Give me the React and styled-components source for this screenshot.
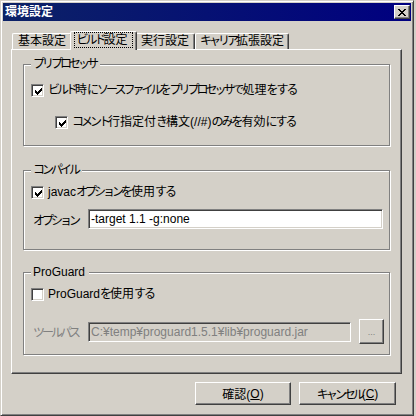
import React from "react";
import styled, { createGlobalStyle } from "styled-components";

const FONT = '"Liberation Sans", "Noto Sans CJK JP", sans-serif';

const GlobalStyle = createGlobalStyle`
  html, body { margin: 0; padding: 0; background: #d4d0c8; }
  body { font-family: ${FONT}; font-size: 12px; color: #000; }
`;

/* MS UI Gothic draws kana narrower than kanji: tighten kana runs */
const Hira = styled.span`
  letter-spacing: -2px;
`;
const Kata = styled.span`
  letter-spacing: -3px;
`;

function T({ children }) {
  const text = String(children);
  const parts = [];
  const re = /([\u3041-\u309F]+)|([\u30A0-\u30FF]+)|([^\u3041-\u30FF]+)/g;
  let m;
  let i = 0;
  while ((m = re.exec(text))) {
    if (m[1]) parts.push(<Hira key={i++}>{m[1]}</Hira>);
    else if (m[2]) parts.push(<Kata key={i++}>{m[2]}</Kata>);
    else parts.push(<React.Fragment key={i++}>{m[3]}</React.Fragment>);
  }
  return <>{parts}</>;
}

const Window = styled.div`
  box-sizing: border-box;
  width: 414px;
  height: 416px;
  background: #d4d0c8;
  border: 1px solid;
  border-color: #d4d0c8 #404040 #404040 #d4d0c8;
  box-shadow: inset 1px 1px 0 #fff, inset -1px -1px 0 #808080;
  padding: 2px;
  display: flex;
  flex-direction: column;
`;

const TitleBar = styled.div`
  height: 18px;
  display: flex;
  align-items: center;
  justify-content: space-between;
  background: linear-gradient(to right, #0c2266, #000080);
  padding: 0 1px 0 2px;
`;

const TitleText = styled.span`
  color: #fff;
  font-weight: bold;
  font-size: 12px;
  line-height: 14px;
`;

const RaisedBox = styled.div`
  box-sizing: border-box;
  background: #d4d0c8;
  border: 1px solid;
  border-color: #fff #404040 #404040 #fff;
  box-shadow: inset -1px -1px 0 #808080;
`;

const CloseButton = styled(RaisedBox)`
  width: 16px;
  height: 14px;
  display: flex;
  align-items: center;
  justify-content: center;
  svg { display: block; }
`;

const Body = styled.div`
  flex: 1;
  display: flex;
  flex-direction: column;
  padding: 10px 9px 0 8px;
`;

const TabStrip = styled.div`
  height: 18px;
  display: flex;
  align-items: flex-end;
  padding-left: 1px;
`;

const Tab = styled.div`
  box-sizing: border-box;
  position: relative;
  z-index: ${(p) => (p.$active ? 1 : 0)};
  width: ${(p) => p.$w + (p.$active ? 4 : 0)}px;
  height: ${(p) => (p.$active ? 19 : 16)}px;
  margin: 0 ${(p) => (p.$active ? -2 : 0)}px ${(p) => (p.$active ? -1 : 0)}px;
  padding-bottom: ${(p) => (p.$active ? 2 : 0)}px;
  background: #d4d0c8;
  border-top: 1px solid #fff;
  border-left: 1px solid #fff;
  border-right: 1px solid #404040;
  border-radius: 2px 2px 0 0;
  box-shadow: inset -1px 0 0 #808080;
  display: flex;
  align-items: center;
  justify-content: center;
  line-height: 13px;
  white-space: nowrap;
`;

const FocusLabel = styled.span`
  outline: 1px dotted #000;
  outline-offset: -1px;
  padding: 0 5px 0 2px;
  height: 16px;
  line-height: 16px;
`;

const Panel = styled.div`
  box-sizing: border-box;
  border: 1px solid;
  border-color: #fff #404040 #404040 #fff;
  box-shadow: inset -1px -1px 0 #808080;
  padding: 14px 11px 18px 11px;
  display: flex;
  flex-direction: column;
`;

const Group = styled.div`
  border: 1px solid #808080;
  box-shadow: 1px 1px 0 #fff, inset 1px 1px 0 #fff;
  margin-top: ${(p) => p.$mt || 0}px;
  padding: 0 6px ${(p) => p.$pb}px 7px;
  display: flex;
  flex-direction: column;
`;

const GroupTitle = styled.span`
  align-self: flex-start;
  margin-top: -8px;
  padding: 0 4px 0 2px;
  height: 14px;
  line-height: 14px;
  background: #d4d0c8;
  white-space: nowrap;
`;

const CheckRow = styled.label`
  display: flex;
  align-items: center;
  gap: 4px;
  height: 13px;
  line-height: 13px;
  margin-top: ${(p) => p.$mt}px;
  margin-left: ${(p) => p.$indent || 0}px;
  white-space: nowrap;
`;

const CheckBox = styled.span`
  box-sizing: border-box;
  flex: none;
  width: 13px;
  height: 13px;
  background: #fff;
  border: 1px solid;
  border-color: #808080 #fff #fff #808080;
  box-shadow: inset 1px 1px 0 #404040, inset -1px -1px 0 #d4d0c8;
  position: relative;
  svg { position: absolute; left: 2px; top: 2px; display: block; }
`;

const FieldRow = styled.div`
  display: flex;
  align-items: center;
  height: ${(p) => p.$h}px;
  margin-top: ${(p) => p.$mt}px;
  margin-left: 2px;
`;

const FieldLabel = styled.span`
  width: 55px;
  flex: none;
  white-space: nowrap;
  color: ${(p) => (p.$disabled ? "#808080" : "#000")};
`;

const TextField = styled.div`
  box-sizing: border-box;
  width: ${(p) => p.$w}px;
  height: 20px;
  flex: none;
  border: 1px solid;
  border-color: #808080 #fff #fff #808080;
  box-shadow: inset 1px 1px 0 #404040, inset -1px -1px 0 #d4d0c8;
  background: ${(p) => (p.$disabled ? "#d4d0c8" : "#fff")};
  color: ${(p) => (p.$disabled ? "#808080" : "#000")};
  padding: 0 2px;
  display: flex;
  align-items: center;
  white-space: nowrap;
  overflow: hidden;
`;

const SmallButton = styled(RaisedBox)`
  width: 25px;
  height: 25px;
  margin-left: 8px;
  flex: none;
  display: flex;
  align-items: center;
  justify-content: center;
  color: #808080;
  font-size: 9px;
  letter-spacing: 0;
`;

const ButtonBar = styled.div`
  display: flex;
  justify-content: flex-end;
  gap: 8px;
  margin-top: 8px;
  padding-right: 6px;
`;

const PushButton = styled(RaisedBox)`
  width: ${(p) => p.$w}px;
  height: 23px;
  display: flex;
  align-items: center;
  justify-content: center;
  white-space: nowrap;
  u { text-underline-offset: 1px; }
`;

const checkCols = [2, 3, 4, 3, 2, 1, 0];

function Check({ checked }) {
  return (
    <CheckBox>
      {checked && (
        <svg width="9" height="9" viewBox="0 0 9 9" shapeRendering="crispEdges">
          {checkCols.map((s, i) => (
            <rect key={i} x={1 + i} y={1 + s} width="1" height="3" fill="#000" />
          ))}
        </svg>
      )}
    </CheckBox>
  );
}

function CloseGlyph() {
  const rows = [
    [0, 1, 6, 7],
    [1, 2, 5, 6],
    [2, 3, 4, 5],
    [3, 4],
    [2, 3, 4, 5],
    [1, 2, 5, 6],
    [0, 1, 6, 7],
  ];
  return (
    <svg width="8" height="7" viewBox="0 0 8 7" shapeRendering="crispEdges">
      {rows.flatMap((xs, y) =>
        xs.map((x) => <rect key={`${x}-${y}`} x={x} y={y} width="1" height="1" fill="#000" />)
      )}
    </svg>
  );
}

export default function App() {
  return (
    <>
      <GlobalStyle />
      <Window>
        <TitleBar>
          <TitleText>環境設定</TitleText>
          <CloseButton>
            <CloseGlyph />
          </CloseButton>
        </TitleBar>
        <Body>
          <TabStrip>
            <Tab $w={60}>基本設定</Tab>
            <Tab $w={63} $active>
              <FocusLabel>
                <T>ビルド設定</T>
              </FocusLabel>
            </Tab>
            <Tab $w={60}>実行設定</Tab>
            <Tab $w={94}>
              <T>キャリア拡張設定</T>
            </Tab>
          </TabStrip>
          <Panel>
            <Group $pb={16}>
              <GroupTitle>
                <T>プリプロセッサ</T>
              </GroupTitle>
              <CheckRow $mt={13}>
                <Check checked />
                <span>
                  <T>ビルド時にソースファイルをプリプロセッサで処理をする</T>
                </span>
              </CheckRow>
              <CheckRow $mt={19} $indent={24}>
                <Check checked />
                <span>
                  <T>コメント行指定付き構文(//#)のみを有効にする</T>
                </span>
              </CheckRow>
            </Group>
            <Group $mt={24} $pb={20}>
              <GroupTitle>
                <T>コンパイル</T>
              </GroupTitle>
              <CheckRow $mt={9}>
                <Check checked />
                <span>
                  <T>javacオプションを使用する</T>
                </span>
              </CheckRow>
              <FieldRow $mt={10} $h={20}>
                <FieldLabel>
                  <T>オプション</T>
                </FieldLabel>
                <TextField $w={295}>-target 1.1 -g:none</TextField>
              </FieldRow>
            </Group>
            <Group $mt={22} $pb={10}>
              <GroupTitle>ProGuard</GroupTitle>
              <CheckRow $mt={9}>
                <Check />
                <span>
                  <T>ProGuardを使用する</T>
                </span>
              </CheckRow>
              <FieldRow $mt={18} $h={25}>
                <FieldLabel $disabled>
                  <T>ツールパス</T>
                </FieldLabel>
                <TextField $w={263} $disabled>
                  C:¥temp¥proguard1.5.1¥lib¥proguard.jar
                </TextField>
                <SmallButton>...</SmallButton>
              </FieldRow>
            </Group>
          </Panel>
          <ButtonBar>
            <PushButton $w={96}>
              確認(<u>O</u>)
            </PushButton>
            <PushButton $w={97}>
              <T>キャンセル</T>(<u>C</u>)
            </PushButton>
          </ButtonBar>
        </Body>
      </Window>
    </>
  );
}
